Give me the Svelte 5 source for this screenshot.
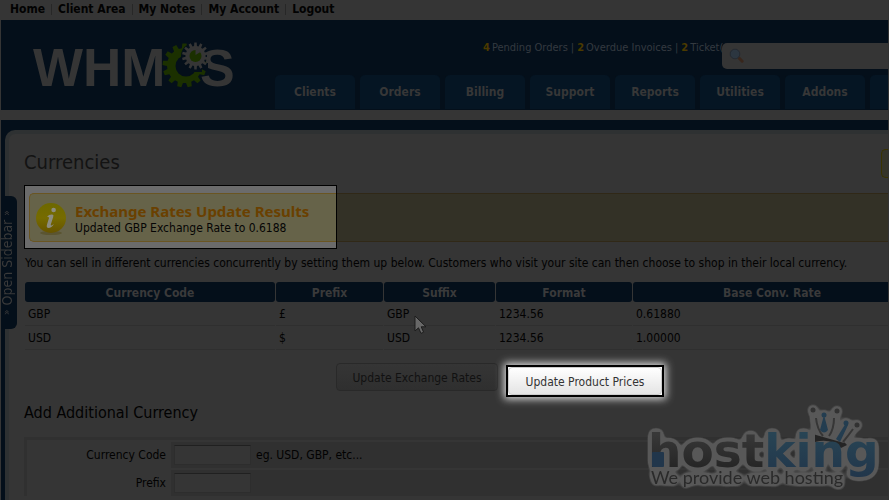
<script>
  const links = ['Home', 'Client Area', 'My Notes', 'My Account', 'Logout'];
  const tabs = ['Clients', 'Orders', 'Billing', 'Support', 'Reports', 'Utilities', 'Addons'];
  const stats = [['4', 'Pending Orders'], ['2', 'Overdue Invoices'], ['2', 'Ticket(s) Awaiting Reply']];
  const heads = ['Currency Code', 'Prefix', 'Suffix', 'Format', 'Base Conv. Rate'];
  const rows = [
    ['GBP', '£', 'GBP', '1234.56', '0.61880'],
    ['USD', '$', 'USD', '1234.56', '1.00000']
  ];

  // Closed outline of a toothed wheel
  function gear(cx, cy, inner, outer, teeth) {
    const pts = [];
    const step = (Math.PI * 2) / teeth;
    for (let i = 0; i < teeth; i++) {
      const a = i * step - Math.PI / 2;
      for (const [f, r] of [[-0.32, inner], [-0.2, outer], [0.2, outer], [0.32, inner]]) {
        pts.push(`${(cx + r * Math.cos(a + f * step)).toFixed(2)},${(cy + r * Math.sin(a + f * step)).toFixed(2)}`);
      }
    }
    return pts.join(' ');
  }
</script>

<div class="page">
  <nav class="top" aria-label="Account">
    {#each links as l}<a href="#top">{l}</a>{/each}
  </nav>

  <header>
    <svg class="logo" width="206" height="70" viewBox="0 -8 206 70" role="img" aria-label="WHMCS">
      <text x="2" y="45" class="word">WHM</text>
      <text x="169" y="45" class="word end">S</text>
      <polygon points={gear(153.5, 24.5, 17.5, 22, 13)} fill="#1b3000" />
      <circle cx="155" cy="25" r="10.5" fill="#040f1a" />
      <circle cx="163" cy="15" r="13" fill="#040f1a" />
      <path d="M158 20 H171 V31 H163 L158 34Z" fill="#040f1a" />
      <path d="M169 22 H177 V28 H171Z" fill="#040f1a" />
      <polygon points={gear(164.5, 15, 10, 13.5, 14)} fill="#353535" />
      <circle cx="164.5" cy="15" r="6" fill="#1b3000" />
      <path d="M164.5 14 V8 A6 6 0 0 1 169.5 11Z" fill="#353535" />
    </svg>
    <div class="right">
      <div class="stats">
        {#each stats as [n, t], i}{#if i}<span class="bar">|</span>{/if}<b>{n}</b><span>{t}</span>{/each}
      </div>
      <nav class="tabs" aria-label="Main">
        {#each tabs as t}<a href="#main">{t}</a>{/each}
        <a href="#main" aria-label="More"></a>
      </nav>
    </div>
    <div class="search">
      <svg width="16" height="16" viewBox="0 0 16 16" aria-hidden="true">
        <path d="M10 10 L13.2 13.2" stroke="#38261c" stroke-width="3" stroke-linecap="round" />
        <circle cx="6" cy="6" r="4.8" fill="#2c3640" stroke="#252a31" />
      </svg>
      <input type="text" aria-label="Search" />
    </div>
  </header>

  <div class="body">
    <button class="sidebar"><small>»</small> Open Sidebar <small>»</small></button>
    <main>
      <a class="corner" href="#help" aria-label="Help"></a>
      <h1>Currencies</h1>

      <section class="banner">
        <div class="spot">
          <div class="info">
            <svg width="32" height="34" viewBox="0 0 32 34" aria-hidden="true">
              <defs>
                <linearGradient id="ball" x1="0" y1="0" x2="0" y2="1">
                  <stop offset="0" stop-color="#6d6800" /><stop offset="0.5" stop-color="#766b00" /><stop offset="1" stop-color="#665300" />
                </linearGradient>
              </defs>
              <ellipse cx="16" cy="31" rx="11" ry="2" fill="#5b5531" />
              <circle cx="16" cy="16" r="15" fill="url(#ball)" />
              <circle cx="18.6" cy="8" r="2.3" fill="#8c8c80" />
              <path d="M12 14.5 Q15 12 18 12.8 Q18.8 13.2 18.2 15 L15.8 22.5 Q15.6 24 17 23.2 L19 22 Q16.5 26 13.5 26 Q11 25.8 12 22.4 L14 16 Q14 14.5 12 14.5Z" fill="#8c8c80" />
            </svg>
            <div>
              <h2>Exchange Rates Update Results</h2>
              <p>Updated GBP Exchange Rate to 0.6188</p>
            </div>
          </div>
        </div>
        <div class="rest"></div>
      </section>

      <p class="intro">You can sell in different currencies concurrently by setting them up below. Customers who visit your site can then choose to shop in their local currency.</p>

      <table class="data">
        <thead><tr>{#each heads as h}<th scope="col">{h}</th>{/each}</tr></thead>
        <tbody>
          {#each rows as r}<tr>{#each r as c}<td>{c}</td>{/each}</tr>{/each}
        </tbody>
      </table>

      <div class="actions">
        <button class="dim">Update Exchange Rates</button>
        <div class="lit"><button>Update Product Prices</button></div>
      </div>

      <h3>Add Additional Currency</h3>
      <form>
        <label for="code">Currency Code</label>
        <div class="field"><input id="code" type="text" /> eg. USD, GBP, etc...</div>
        <label for="prefix">Prefix</label>
        <div class="field"><input id="prefix" type="text" /></div>
      </form>
    </main>
  </div>

  <svg class="cursor" width="14" height="20" viewBox="0 0 14 20" aria-hidden="true">
    <path d="M1 1 V16 L4.5 12.8 L7 18.4 L9.6 17.2 L7.2 11.8 H12Z" fill="#686868" stroke="#1c1c1c" />
  </svg>

  <svg class="mark" width="246" height="106" viewBox="0 0 246 106" role="img" aria-label="hostking, We provide web hosting">
    <defs>
      <linearGradient id="gray" x1="0" y1="0" x2="0" y2="1"><stop offset="0.2" stop-color="#383838" /><stop offset="1" stop-color="#202020" /></linearGradient>
      <linearGradient id="blue" x1="0" y1="0" x2="0" y2="1"><stop offset="0.2" stop-color="#284454" /><stop offset="1" stop-color="#21364b" /></linearGradient>
      <filter id="rim" x="-10" y="-10" width="266" height="126" filterUnits="userSpaceOnUse" color-interpolation-filters="sRGB">
        <feGaussianBlur in="SourceAlpha" stdDeviation="3" />
        <feComponentTransfer result="fat"><feFuncA type="linear" slope="14" intercept="-0.8" /></feComponentTransfer>
        <feFlood flood-color="#585858" />
        <feComposite in2="fat" operator="in" result="edge" />
        <feMerge><feMergeNode in="edge" /><feMergeNode in="SourceGraphic" /></feMerge>
      </filter>
    </defs>
    <g filter="url(#rim)">
      <path d="M172 36 Q188 27 204 46 L198 49 Q188 39 172 43Z" fill="#242424" />
      <path d="M173 36 L170 12 L181 30 L193 12 L191 34 L214 26 L201 44Z" fill="#585858" />
      <path d="M173 19 Q174 30 180 37 M191 19 Q191 30 186 37 M210 30 Q205 37 200 43" stroke="#363636" stroke-width="2" fill="none" />
      <path d="M181 16 L177 31 Q181 36 185 31Z M203 24 L193 40 L197 43 L205 26Z" fill="#233d50" />
      <g fill="#233d50"><circle cx="181" cy="16" r="2.5" /><circle cx="203" cy="24" r="2.5" /></g>
      <g fill="#323232"><circle cx="170" cy="11" r="2.5" /><circle cx="194" cy="12" r="2.5" /><circle cx="214" cy="26" r="2.5" /></g>
      <text x="5" y="68" class="host"><tspan fill="url(#gray)">host</tspan><tspan fill="url(#blue)">king</tspan></text>
      <rect x="9" y="53" width="12" height="15" rx="1" fill="#21364b" />
      <text x="8" y="85" class="tag">We provide web hosting</text>
    </g>
  </svg>
</div>

<style>
  :global(body) { margin: 0; background: #353535; overflow: hidden; }
  .page { position: relative; height: 100vh; overflow: hidden; display: flex; flex-direction: column; background: #353535; color: #020202; border-left: 1px solid #353535; border-right: 1px solid #333; box-sizing: border-box; font: 12px/16px "DejaVu Sans Condensed", Tahoma, sans-serif; }
  button, input { font: inherit; color: inherit; }
  a { color: inherit; text-decoration: none; }
  h1, h2, h3, p { margin: 0; font-weight: 400; }
  .top { height: 20px; flex: none; display: flex; align-items: flex-start; font-weight: 700; padding-left: 2px; }
  .top a { padding: 0 6px 0 7px; line-height: 18px; position: relative; }
  .top a + a::before { content: ''; position: absolute; left: 0; top: 4px; height: 11px; border-left: 1px solid #272727; }
  header { position: relative; height: 90px; flex: none; display: flex; align-items: flex-start; background: #040f1a; overflow: hidden; }
  .logo { margin: 13px 0 0 30px; flex: none; }
  .word { font: 700 53px "Liberation Sans", Arial, sans-serif; fill: #353535; }
  .end { font-size: 52px; }
  .right { flex: 1; min-width: 0; margin-left: 38px; }
  .stats { display: flex; gap: 2px; height: 55px; margin-left: 208px; font-size: 11px; line-height: 55px; white-space: nowrap; color: #343a40; }
  .stats b { color: #4b3a00; }
  .bar { padding: 0 1px; }
  .tabs { display: flex; gap: 5px; }
  .tabs a { width: 80px; height: 34px; flex: none; background: #051523; border-radius: 5px 5px 0 0; text-align: center; font-weight: 700; line-height: 35px; color: #373737; }
  .search { position: absolute; right: -1px; top: 23px; width: 167px; height: 26px; display: flex; align-items: center; background: #353535; border-radius: 5px 0 0 5px; padding-left: 7px; box-sizing: border-box; }
  .search input { flex: 1; min-width: 0; border: 0; background: none; outline: 0; }
  .body { position: relative; flex: 1; min-height: 0; margin-top: 10px; padding: 10px 0 0 4px; background: #040f1a; }
  .sidebar { position: absolute; z-index: 1; left: 0; top: 76px; width: 16px; height: 133px; padding: 0 0 0 5px; box-sizing: border-box; border: 0; border-radius: 6px 0 0 6px; background: #040f1a; writing-mode: vertical-rl; transform: rotate(180deg); font-size: 14px; line-height: 10px; text-align: center; color: #3a3a3a; white-space: nowrap; }
  .sidebar small { font-size: 10px; }
  main { position: relative; height: 100%; box-sizing: border-box; background: #353535; border: solid #2e3132; border-width: 4px 0 0 4px; border-radius: 10px 0 0 0; padding: 15px 0 0 15px; overflow: hidden; }
  .corner { position: absolute; right: 0; top: 15px; width: 7px; height: 29px; box-sizing: border-box; border: solid #3a3300; border-width: 1px 0 1px 1px; border-radius: 5px 0 0 5px; background: #35342a; }
  h1 { font-size: 20px; line-height: 26px; color: #131313; padding-bottom: 10px; }
  .banner { display: flex; align-items: center; }
  .spot { width: 313px; height: 64px; box-sizing: border-box; border: 1px solid #000; background: #6b6b6b; padding: 7px 0 6px 4px; }
  .info { height: 49px; box-sizing: border-box; border: solid #6a5522; border-width: 1px 0 1px 1px; border-radius: 5px 0 0 5px; background: #666349; display: flex; align-items: center; gap: 8px; padding: 3px 0 0 5px; color: #050505; }
  .info h2 { font: 700 15px/18px "Noto Sans", sans-serif; color: #6a4000; }
  .rest { flex: 1; height: 49px; box-sizing: border-box; border: solid #302817; border-width: 1px 0; background: #333126; margin-top: 1px; }
  .intro { padding: 5px 0 9px 1px; white-space: nowrap; line-height: 18px; }
  .data { width: calc(100% + 24px); table-layout: fixed; border-spacing: 1px 0; line-height: 16px; margin-top: 1px; }
  .data th { height: 20px; padding: 1px 0 0; box-sizing: border-box; background: #040f1a; border-radius: 3px; color: #3a3a3a; font-weight: 700; }
  .data th:nth-child(1) { width: 250px; }
  .data th:nth-child(2) { width: 107px; }
  .data th:nth-child(3) { width: 111px; }
  .data th:nth-child(4) { width: 136px; }
  .data td { height: 23px; padding: 0 3px; border-bottom: 1px solid #2f2f2f; }
  .actions { display: flex; align-items: flex-start; gap: 8px; padding: 13px 0 0 312px; height: 50px; box-sizing: border-box; }
  .dim { width: 162px; height: 28px; padding: 1px 0 0; border: 1px solid #292929; border-radius: 4px; background: linear-gradient(#353535, #2f2f2f); color: #111; white-space: nowrap; }
  .lit { width: 158px; height: 32px; box-sizing: border-box; margin-top: 2px; border: 2px solid #000; background: #fff; box-shadow: 0 0 8px 2px #ddd; }
  .lit button { width: 100%; height: 100%; padding: 1px 0 0; border: 1px solid #ccc; border-radius: 4px; background: linear-gradient(#fff, #e4e4e4); color: #333; white-space: nowrap; }
  h3 { font-size: 16px; line-height: 26px; padding-bottom: 11px; }
  form { display: grid; grid-template-columns: 139px 1fr; gap: 2px 5px; border: solid #303030; border-width: 3px 0 0 3px; padding-top: 2px; }
  label { text-align: right; line-height: 26px; }
  .field { height: 26px; background: #303030; display: flex; align-items: center; gap: 5px; padding-left: 3px; }
  .field input { width: 77px; height: 20px; box-sizing: border-box; padding: 0 3px; border: 1px solid #2d2d2d; border-top-color: #202020; background: #353535; }
  .cursor { position: absolute; left: 413px; top: 315px; }
  .mark { position: absolute; right: -1px; bottom: -5px; }
  .host { font: 700 47px "DejaVu Sans", sans-serif; }
  .tag { font: 18px Lato, sans-serif; fill: #2a2a2a; }
</style>
